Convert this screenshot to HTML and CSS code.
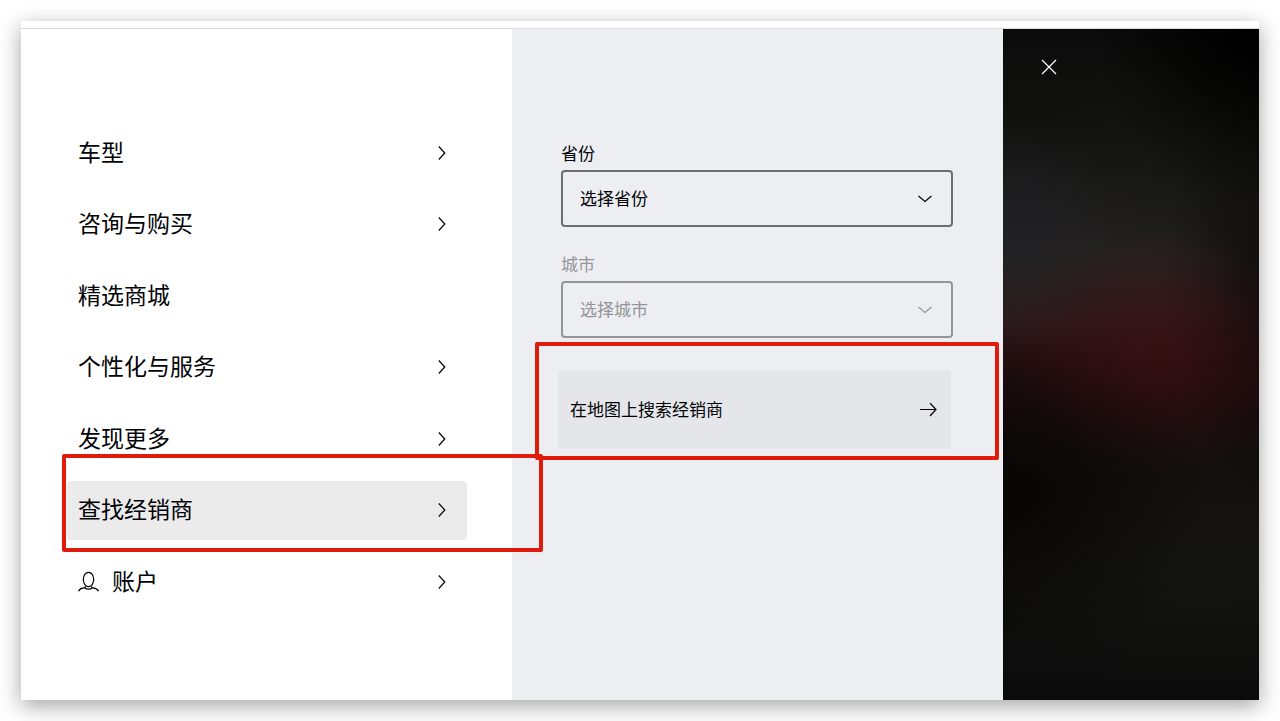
FILE: index.html
```html
<!DOCTYPE html>
<html lang="zh-CN">
<head>
  <meta charset="UTF-8">
  <meta name="viewport" content="width=device-width, initial-scale=1.0">
  <title>查找经销商</title>
  <link rel="stylesheet" href="styles.css">
</head>
<body>
  <div class="window">
    <div class="topbar"></div>
    <div class="drawer">

      <!-- 一级菜单 -->
      <nav class="menu">
        <button class="menu-item" type="button">
          <span class="text">车型</span>
          <svg class="chevron" viewBox="0 0 8 14"><path d="M.8 .5 6.800 7 .8 13.500"/></svg>
        </button>
        <button class="menu-item" type="button">
          <span class="text">咨询与购买</span>
          <svg class="chevron" viewBox="0 0 8 14"><path d="M.8 .5 6.800 7 .8 13.500"/></svg>
        </button>
        <a class="menu-item" href="#"><span class="text">精选商城</span></a>
        <button class="menu-item" type="button">
          <span class="text">个性化与服务</span>
          <svg class="chevron" viewBox="0 0 8 14"><path d="M.8 .5 6.800 7 .8 13.500"/></svg>
        </button>
        <button class="menu-item" type="button">
          <span class="text">发现更多</span>
          <svg class="chevron" viewBox="0 0 8 14"><path d="M.8 .5 6.800 7 .8 13.500"/></svg>
        </button>
        <button class="menu-item active" type="button">
          <span class="text">查找经销商</span>
          <svg class="chevron" viewBox="0 0 8 14"><path d="M.8 .5 6.800 7 .8 13.500"/></svg>
          <span class="mark mark-menu"></span>
        </button>
        <button class="menu-item" type="button">
          <svg class="user" viewBox="0 0 22 22"><ellipse cx="10.500" cy="8.500" rx="5.200" ry="7.200"/><path d="M.5 20.300c1-2.300 3.200-3.200 5.200-3.400 1.100-.1 1.800-.9 2-1.600M20.500 20.300c-1-2.300-3.200-3.200-5.200-3.400-1.100-.1-1.800-.9-2-1.600M6.500 16.700c2.200 1.900 5.800 1.900 8 0"/></svg>
          <span class="text">账户</span>
          <svg class="chevron" viewBox="0 0 8 14"><path d="M.8 .5 6.800 7 .8 13.500"/></svg>
        </button>
      </nav>

      <!-- 经销商查找 -->
      <section class="dealer">
        <div class="field">
          <label for="province">省份</label>
          <div class="select-box">
            <select id="province"><option>选择省份</option></select>
            <svg class="arrow-down" viewBox="0 0 14 8"><path d="M.5 1 7 6.500 13.500 1"/></svg>
          </div>
        </div>
        <div class="field disabled">
          <label for="city">城市</label>
          <div class="select-box">
            <select id="city" disabled><option>选择城市</option></select>
            <svg class="arrow-down" viewBox="0 0 14 8"><path d="M.5 1 7 6.500 13.500 1"/></svg>
          </div>
        </div>
        <a class="map-link" href="#">
          <span class="text">在地图上搜索经销商</span>
          <svg class="arrow-right" viewBox="0 0 18 14"><path d="M1 6.500h16M11 0l6 6.500-6 6.500"/></svg>
          <span class="mark mark-map"></span>
        </a>
      </section>

      <div class="backdrop">
        <button class="close" type="button" aria-label="关闭">
          <svg viewBox="0 0 16 16"><path d="M1 1l14 14M15 1 1 15"/></svg>
        </button>
      </div>
    </div>
  </div>
</body>
</html>
```

FILE: styles.css
```css
* {margin:0; padding:0; box-sizing:border-box;}
body {
  min-height:100vh; padding:21px; display:flex;
  font-family:"Noto Sans CJK SC", sans-serif;
  font-size:17px; line-height:24px;
  color:#010205; background:#fff;
}
button, select {font:inherit; color:inherit; background:none; border:0;}
a {color:inherit; text-decoration:none;}
svg {display:block; flex:none; fill:none; stroke:currentColor; stroke-width:1.2;}

.window {
  flex:1; display:flex; flex-direction:column;
  background:#fff; box-shadow:0 6px 21px rgba(0,0,0,0.36);
}
.topbar {height:8px; border-bottom:1px solid #dcdcdc;}
.drawer {
  flex:1; display:grid; grid-template-columns:1fr 1fr 256px;
}

/* 左侧菜单 */
.menu {
  padding:94px 45px 89px 46px;
  display:flex; flex-direction:column; justify-content:space-between;
}
.menu-item {
  position:relative; height:59px; padding:0 21px 0 11px;
  display:flex; align-items:center;
  font-size:23px; border-radius:4px; text-align:left; cursor:pointer;
}
.menu-item.active {background:#ebebeb;}
.menu-item .text {padding-bottom:4px;}
.chevron {width:8px; height:14px; margin-left:auto;}
.user {width:22px; height:22px; margin-right:12px;}

/* 中间面板 */
.dealer {
  padding:112px 50px 0 49px; background:#edeef2;
}
.field {margin-bottom:25px;}
.field label {display:block; margin-bottom:5px;}
.field.disabled {margin-bottom:32px; color:#949598;}
.select-box {display:grid; align-items:center;}
.select-box select, .select-box svg {grid-area:1 / 1;}
.select-box select {
  appearance:none; width:100%; height:57px; padding:0 17px 1px;
  border:2px solid #6b6d70; border-radius:4px; opacity:1; cursor:pointer;
}
.field.disabled select {border-color:#949598; cursor:default;}
.arrow-down {
  width:14px; height:8px; margin-right:21px;
  justify-self:end; pointer-events:none;
}
.map-link {
  position:relative; height:79px; margin:0 2px 0 -3px; padding:0 14px 0 12px;
  display:flex; align-items:center; justify-content:space-between;
  background:#e5e6ea; border-radius:4px;
}
.map-link .text {padding-bottom:2px;}
.arrow-right {width:18px; height:14px;}

/* 红框标注 */
.mark {
  position:absolute; z-index:1; pointer-events:none;
  border:4px solid #df1c0c; border-radius:2px;
}
.mark-menu {inset:-27px -76px -12px -5px;}
.mark-map {inset:-28px -48px -11px -23px;}

/* 右侧模糊背景 */
.backdrop {
  padding:30px 38px;
  background:
    radial-gradient(ellipse 65% 26% at 100% 0, #000 10%, transparent),
    radial-gradient(ellipse 60% 18% at 62% 48%, rgba(62,14,17,0.6), transparent),
    radial-gradient(ellipse 50% 16% at 0 30%, rgba(31,32,36,0.7), transparent),
    radial-gradient(ellipse 45% 32% at 108% 38%, rgba(10,9,8,0.9), transparent),
    radial-gradient(ellipse 80% 26% at 0 70%, rgba(5,4,3,0.8), transparent),
    radial-gradient(ellipse 60% 18% at 75% 19%, rgba(21,23,14,0.7), transparent),
    radial-gradient(ellipse 90% 22% at 80% 77%, rgba(22,22,20,0.7), transparent),
    linear-gradient(#0c0b0b, #111110 14%, #1b1a1a 24%, #272322 34%, #2d1c1e 42%, #271012 49%, #1a0d0e 57%, #110d0c 67%, #111110 80%, #0c0b0b);
}
.close {display:block; color:#fff; cursor:pointer;}
.close svg {width:16px; height:16px;}
```
